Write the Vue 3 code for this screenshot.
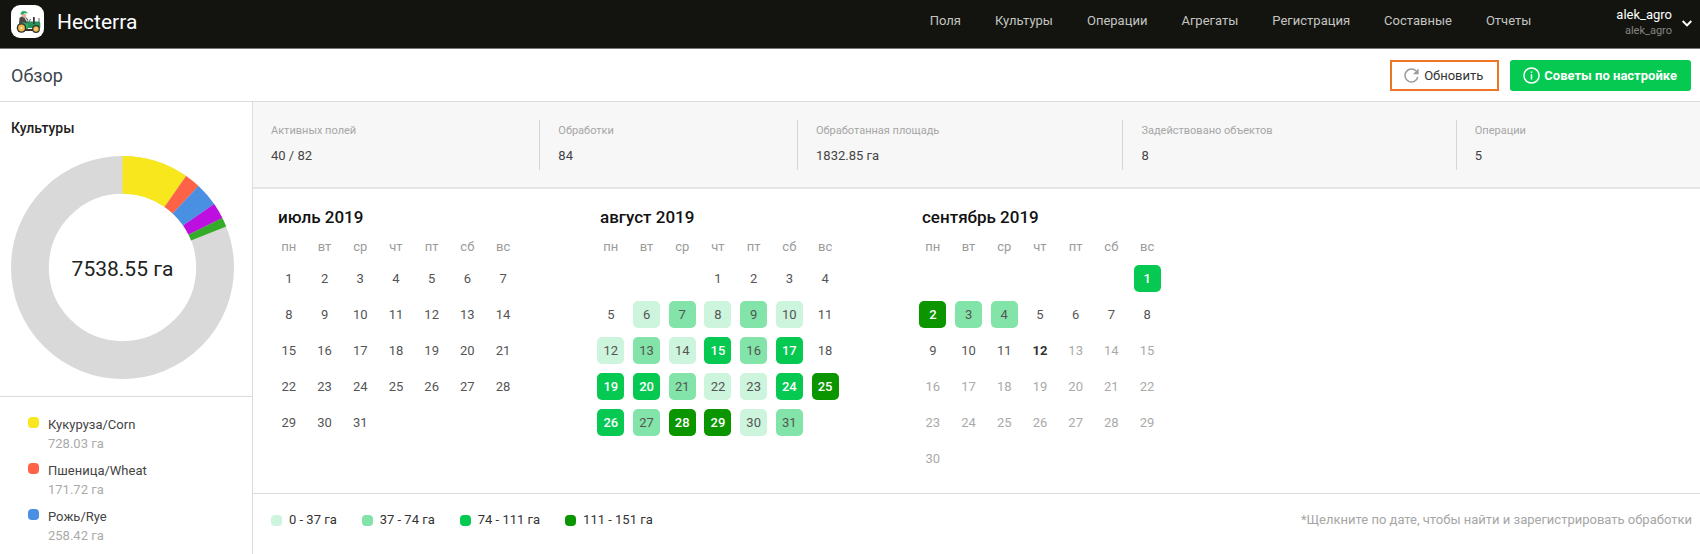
<script setup>
const navItems = ['Поля', 'Культуры', 'Операции', 'Агрегаты', 'Регистрация', 'Составные', 'Отчеты']

const total = 7538.55
const slices = [
  { color: '#f8e71c', area: 728.03 },
  { color: '#ff6347', area: 171.72 },
  { color: '#4a90e2', area: 258.42 },
  { color: '#bd10e0', area: 173.6 },
  { color: '#35ab2a', area: 100.5 }
]

function point(radius, share) {
  const angle = share * 2 * Math.PI
  return `${(112 + radius * Math.sin(angle)).toFixed(2)} ${(112 - radius * Math.cos(angle)).toFixed(2)}`
}

let passed = 0
const arcs = slices.map(({ color, area }) => {
  const from = passed / total
  passed += area
  const to = passed / total
  return {
    color,
    d: `M${point(112, from)}A112 112 0 0 1 ${point(112, to)}L${point(74, to)}A74 74 0 0 0 ${point(74, from)}Z`
  }
})

const crops = [
  { name: 'Кукуруза/Corn', area: '728.03 га', tone: 'corn' },
  { name: 'Пшеница/Wheat', area: '171.72 га', tone: 'wheat' },
  { name: 'Рожь/Rye', area: '258.42 га', tone: 'rye' }
]

const stats = [
  { label: 'Активных полей', value: '40 / 82' },
  { label: 'Обработки', value: '84' },
  { label: 'Обработанная площадь', value: '1832.85 га' },
  { label: 'Задействовано объектов', value: '8' },
  { label: 'Операции', value: '5' }
]

const weekdays = ['пн', 'вт', 'ср', 'чт', 'пт', 'сб', 'вс']

function buildMonth(title, offset, length, levels = {}, today = 99) {
  const weeks = []
  for (let start = 1 - offset; start <= length; start += 7) {
    weeks.push(
      Array.from({ length: 7 }, (_, i) => {
        const day = start + i
        if (day < 1 || day > length) return null
        return { day, classes: [levels[day] ? `level-${levels[day]}` : '', { today: day === today, future: day > today }] }
      })
    )
  }
  return { title, weeks }
}

const months = [
  buildMonth('июль 2019', 0, 31),
  buildMonth('август 2019', 3, 31, {
    6: 1, 7: 2, 8: 1, 9: 2, 10: 1, 12: 1, 13: 2, 14: 1, 15: 3, 16: 2, 17: 3, 19: 3, 20: 3,
    21: 2, 22: 1, 23: 1, 24: 3, 25: 4, 26: 3, 27: 2, 28: 4, 29: 4, 30: 1, 31: 2
  }),
  buildMonth('сентябрь 2019', 6, 30, { 1: 3, 2: 4, 3: 2, 4: 2 }, 12)
]

const ranges = ['0 - 37 га', '37 - 74 га', '74 - 111 га', '111 - 151 га']
</script>

<template>
  <div class="page">
    <header class="topbar">
      <a class="brand" href="#">
        <svg class="logo" viewBox="0 0 33 33" aria-hidden="true">
          <rect width="33" height="33" rx="9" fill="#fff" />
          <path d="M8.5 13 10.500 11.500h4l2.500 3 1 4.500-4 1-6-1z" fill="#4b4744" />
          <path d="m13 12 1.500 0 2 3.500 3 .5v1l-4-.5z" fill="#d9d6d4" />
          <path d="M10.500 9h4.500v2.500l-2 1.500-2-1.500z" fill="#e9b08e" />
          <path d="M9.500 9.500q0-3.500 3.500-3.500 2.500 0 3 1.500l1.500.8h-4l-2 1.200z" fill="#23a566" />
          <path d="M16 16.500h11.500q1.800 0 1.800 2v4.500H16z" fill="#229457" />
          <path d="M6.500 20q5-4.500 10.500-1v5H8z" fill="#2fae6a" />
          <path d="M14 24h8v2h-8z" fill="#333" />
          <path d="M22 12h1.800v7H22z" fill="#3a3a3a" />
          <path d="M28 13v4M19.500 14l-2 4" stroke="#666" fill="none" />
          <circle cx="10.500" cy="23" r="4.800" fill="#303030" />
          <circle cx="10.500" cy="23" r="3.400" fill="#f2b84b" />
          <circle cx="10.500" cy="23" r="1" fill="#fff0c0" />
          <circle cx="25" cy="24" r="3.900" fill="#303030" />
          <circle cx="25" cy="24" r="2.700" fill="#f2b84b" />
          <circle cx="25" cy="24" r="0.800" fill="#fff0c0" />
        </svg>
        <span>Hecterra</span>
      </a>
      <nav class="nav">
        <a v-for="item in navItems" :key="item" href="#">{{ item }}</a>
      </nav>
      <button class="user" type="button">
        <span class="user-names">
          <span class="user-main">alek_agro</span>
          <span class="user-sub">alek_agro</span>
        </span>
        <svg class="chevron" viewBox="0 0 9 6" aria-hidden="true">
          <path d="m.6.8 3.9 3.9L8.400.8" fill="none" stroke="#fff" stroke-width="1.8" />
        </svg>
      </button>
    </header>

    <div class="subbar">
      <h1>Обзор</h1>
      <div class="actions">
        <button class="refresh" type="button">
          <svg class="refresh-icon" viewBox="0 0 15 15" aria-hidden="true">
            <path d="M13.800 9A6.500 6.500 0 1 1 12.200 3" fill="none" stroke="#9a9a9a" stroke-width="1.5" />
            <path d="M14.600.5v5.700H9z" fill="#9a9a9a" />
          </svg>
          Обновить
        </button>
        <button class="tips" type="button">
          <svg class="tips-icon" viewBox="0 0 17 17" aria-hidden="true">
            <circle cx="8.500" cy="8.500" r="7.600" fill="none" stroke="#fff" stroke-width="1.5" />
            <path d="M8.500 7.200v5.200M8.500 4.400v1.600" stroke="#fff" stroke-width="1.5" />
          </svg>
          Советы по настройке
        </button>
      </div>
    </div>

    <div class="body">
      <aside class="sidebar">
        <section class="chart">
          <h2>Культуры</h2>
          <div class="donut">
            <svg viewBox="0 0 224 224" aria-hidden="true">
              <circle cx="112" cy="112" r="93" fill="none" stroke="#d9d9d9" stroke-width="38" />
              <path v-for="arc in arcs" :key="arc.color" :d="arc.d" :fill="arc.color" />
            </svg>
            <span class="donut-total">7538.55 га</span>
          </div>
        </section>
        <ul class="crops">
          <li v-for="crop in crops" :key="crop.name">
            <span class="swatch" :class="crop.tone"></span>
            <span class="crop-text">
              <span class="crop-name">{{ crop.name }}</span>
              <span class="crop-area">{{ crop.area }}</span>
            </span>
          </li>
        </ul>
      </aside>

      <main class="main">
        <dl class="stats">
          <div v-for="stat in stats" :key="stat.label" class="stat">
            <dt>{{ stat.label }}</dt>
            <dd>{{ stat.value }}</dd>
          </div>
        </dl>

        <div class="months">
          <table v-for="month in months" :key="month.title">
            <caption>{{ month.title }}</caption>
            <thead>
              <tr>
                <th v-for="weekday in weekdays" :key="weekday" scope="col">{{ weekday }}</th>
              </tr>
            </thead>
            <tbody>
              <tr v-for="(week, w) in month.weeks" :key="w">
                <td v-for="(cell, i) in week" :key="i">
                  <button v-if="cell" class="day" :class="cell.classes" type="button">{{ cell.day }}</button>
                </td>
              </tr>
            </tbody>
          </table>
        </div>

        <footer class="footer">
          <ul class="ranges">
            <li v-for="(range, i) in ranges" :key="range">
              <span class="swatch" :class="`level-${i + 1}`"></span>{{ range }}
            </li>
          </ul>
          <p>*Щелкните по дате, чтобы найти и зарегистрировать обработки</p>
        </footer>
      </main>
    </div>
  </div>
</template>

<style>
body {
  margin: 0;
  background: #fff;
}
</style>

<style scoped>
.page {
  display: flex;
  flex-direction: column;
  min-height: 100vh;
  font-family: Roboto, "Liberation Sans", sans-serif;
  font-size: 13px;
  color: #333;
}

button {
  margin: 0;
  padding: 0;
  border: 0;
  background: none;
  font: inherit;
  color: inherit;
  cursor: pointer;
}

a {
  color: inherit;
  text-decoration: none;
}

h1,
h2,
p,
ul,
dl,
dd {
  margin: 0;
  padding: 0;
}

ul {
  list-style: none;
}

.topbar {
  display: flex;
  align-items: flex-start;
  padding: 0 8px 0 11px;
  height: 48px;
  background: #13140f;
  border-bottom: 1px solid #77777a;
  color: #fff;
}

.brand {
  display: flex;
  align-items: center;
  gap: 13px;
  padding-top: 5px;
  font-size: 21px;
}

.logo {
  width: 33px;
  height: 33px;
}

.nav {
  display: flex;
  gap: 34px;
  margin-left: auto;
  line-height: 42px;
  color: #c4c4c2;
}

.user {
  display: flex;
  align-items: center;
  gap: 10px;
  margin-left: 85px;
  padding-top: 7px;
  text-align: right;
}

.user-names {
  display: flex;
  flex-direction: column;
  line-height: 16px;
}

.user-sub {
  font-size: 11px;
  color: #858583;
}

.chevron {
  width: 10px;
  height: 7px;
}

.subbar {
  display: flex;
  align-items: center;
  justify-content: space-between;
  height: 52px;
  padding: 0 9px 0 11px;
  border-bottom: 1px solid #dcdcdc;
}

h1 {
  font-size: 18px;
  font-weight: 400;
  color: #3c444c;
}

.actions {
  display: flex;
  align-items: center;
  gap: 11px;
}

.refresh,
.tips {
  display: flex;
  align-items: center;
  height: 31px;
}

.refresh {
  gap: 5px;
  padding: 0 14px 0 12px;
  border: 2px solid #ee7526;
  box-sizing: border-box;
  color: #333;
}

.refresh-icon {
  width: 15px;
  height: 15px;
}

.tips {
  gap: 4px;
  padding: 0 14px 0 13px;
  border-radius: 3px;
  background: #05c951;
  color: #fff;
  font-weight: 700;
}

.tips-icon {
  width: 17px;
  height: 17px;
}

.body {
  display: flex;
  flex: 1;
}

.sidebar {
  flex: none;
  width: 252px;
  border-right: 1px solid #dcdcdc;
}

.chart {
  padding: 16px 18px 17px 11px;
  border-bottom: 1px solid #dcdcdc;
}

h2 {
  margin-bottom: 18px;
  font-size: 14px;
  font-weight: 500;
  line-height: 20px;
  color: #222;
}

.donut {
  display: grid;
  place-items: center;
}

.donut > * {
  grid-area: 1 / 1;
}

.donut svg {
  display: block;
  width: 100%;
}

.donut-total {
  padding-top: 2px;
  font-size: 21px;
  color: #222;
}

.crops {
  display: flex;
  flex-direction: column;
  gap: 8px;
  padding: 18px 28px;
}

.crops li {
  display: flex;
  gap: 9px;
}

.crops .swatch {
  margin-top: 2px;
}

.crop-text {
  display: flex;
  flex-direction: column;
  line-height: 19px;
}

.crop-name {
  color: #444;
}

.crop-area {
  color: #aaa;
}

.swatch {
  flex: none;
  width: 11px;
  height: 11px;
  border-radius: 4px;
}

.corn {
  background: #f8e71c;
}

.wheat {
  background: #ff6347;
}

.rye {
  background: #4a90e2;
}

.main {
  display: flex;
  flex: 1;
  flex-direction: column;
  min-width: 0;
}

.stats {
  display: flex;
  padding: 18px 0 17px;
  background: #f7f7f7;
  border-bottom: 2px solid #e6e6e6;
}

.stat {
  flex: 1 1 auto;
  padding: 0 18px;
  box-sizing: border-box;
}

.stat + .stat {
  border-left: 1px solid #d6d6d6;
}

.stat:last-child {
  padding-right: 9px;
}

dt {
  font-size: 11px;
  line-height: 22px;
  color: #a6a6a6;
}

dd {
  line-height: 28px;
  color: #444;
}

.months {
  display: flex;
  align-items: flex-start;
  gap: 72px;
  padding: 12px 18px 17px;
}

table {
  width: 250px;
  table-layout: fixed;
  border-collapse: collapse;
}

caption {
  padding-left: 7px;
  font-size: 17px;
  font-weight: 500;
  line-height: 32px;
  text-align: left;
  color: #111;
}

th,
td {
  padding: 0;
  text-align: center;
}

th {
  height: 27px;
  font-weight: 400;
  color: #9b9b9b;
}

td {
  height: 36px;
}

.day {
  display: block;
  width: 27px;
  height: 27px;
  margin: 0 auto;
  border-radius: 5px;
  color: #555;
}

.today {
  font-weight: 700;
  color: #333;
}

.future {
  color: #aaa;
}

.level-1 {
  background: #cdf4dc;
}

.level-2 {
  background: #82e4a8;
}

.level-3 {
  background: #05c951;
}

.level-4 {
  background: #0b9600;
}

.day.level-3,
.day.level-4 {
  font-weight: 500;
  color: #fff;
}

.footer {
  display: flex;
  justify-content: space-between;
  padding: 16px 8px 16px 18px;
  border-top: 1px solid #dcdcdc;
  line-height: 20px;
}

.ranges {
  display: flex;
  gap: 25px;
}

.ranges li {
  display: flex;
  align-items: center;
  gap: 7px;
}

.footer p {
  color: #a6a6a6;
}
</style>
